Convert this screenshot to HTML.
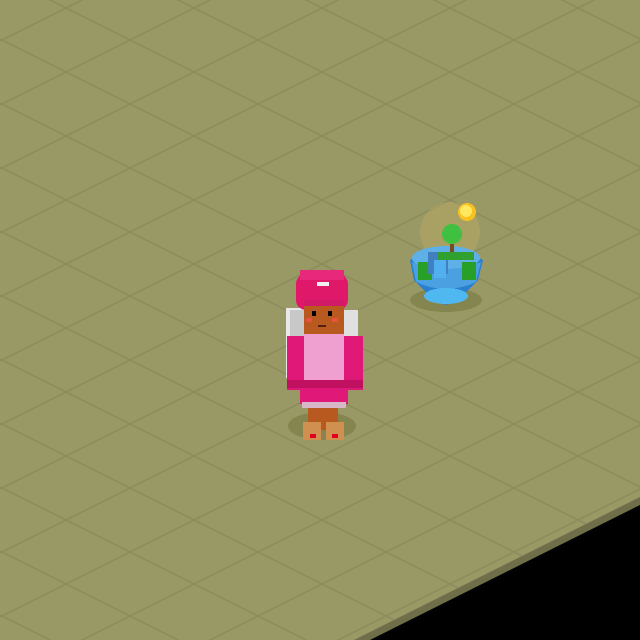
<!DOCTYPE html>
<html><head><style>html,body{margin:0;padding:0;background:#000;width:640px;height:640px;overflow:hidden}svg{display:block;overflow:hidden}</style></head><body>
<svg width="640" height="640" viewBox="0 0 640 640" xmlns="http://www.w3.org/2000/svg" shape-rendering="crispEdges">
<defs>
<clipPath id="fl"><polygon points="0,0 640,0 640,497 360,637 360,640 0,640"/></clipPath>
</defs>
<rect width="640" height="640" fill="#000"/>
<polygon points="0,0 640,0 640,497 354,640 0,640" fill="#999966"/>
<g clip-path="url(#fl)" stroke="#8c8c5c" stroke-width="1.6" fill="none" shape-rendering="auto">
<line x1="0" y1="-345" x2="1400" y2="355"/><line x1="0" y1="-281" x2="1400" y2="419"/><line x1="0" y1="-217" x2="1400" y2="483"/><line x1="0" y1="-153" x2="1400" y2="547"/><line x1="0" y1="-89" x2="1400" y2="611"/><line x1="0" y1="-25" x2="1400" y2="675"/><line x1="0" y1="39" x2="1400" y2="739"/><line x1="0" y1="103" x2="1400" y2="803"/><line x1="0" y1="167" x2="1400" y2="867"/><line x1="0" y1="231" x2="1400" y2="931"/><line x1="0" y1="295" x2="1400" y2="995"/><line x1="0" y1="359" x2="1400" y2="1059"/><line x1="0" y1="423" x2="1400" y2="1123"/><line x1="0" y1="487" x2="1400" y2="1187"/><line x1="0" y1="551" x2="1400" y2="1251"/><line x1="0" y1="615" x2="1400" y2="1315"/>
<line x1="0" y1="41" x2="1400" y2="-659"/><line x1="0" y1="105" x2="1400" y2="-595"/><line x1="0" y1="169" x2="1400" y2="-531"/><line x1="0" y1="233" x2="1400" y2="-467"/><line x1="0" y1="297" x2="1400" y2="-403"/><line x1="0" y1="361" x2="1400" y2="-339"/><line x1="0" y1="425" x2="1400" y2="-275"/><line x1="0" y1="489" x2="1400" y2="-211"/><line x1="0" y1="553" x2="1400" y2="-147"/><line x1="0" y1="617" x2="1400" y2="-83"/><line x1="0" y1="681" x2="1400" y2="-19"/><line x1="0" y1="745" x2="1400" y2="45"/><line x1="0" y1="809" x2="1400" y2="109"/><line x1="0" y1="873" x2="1400" y2="173"/>
</g>
<polygon points="640,497 640,505 370,640 354,640" fill="#6e6e48"/>
<!-- fountain -->
<ellipse cx="446" cy="300" rx="36" ry="12" fill="#85854f"/>
<circle cx="450" cy="232" r="30" fill="#c8b060" opacity="0.35"/>
<circle cx="467" cy="212" r="9" fill="#f8c020"/><circle cx="466" cy="211" r="6" fill="#ffe860"/>
<path d="M410,260 Q446,240 483,260 L478,280 Q460,300 446,305 Q432,300 414,280 Z" fill="#2a80d0"/>
<ellipse cx="446" cy="258" rx="34" ry="12" fill="#60b0e8"/>
<path d="M412,262 Q446,276 481,262 L476,282 Q446,296 416,282 Z" fill="#4aa0e0"/>
<rect x="418" y="262" width="14" height="18" fill="#28a028"/><rect x="462" y="262" width="14" height="18" fill="#28a028"/>
<rect x="428" y="252" width="20" height="22" fill="#4080c0"/><rect x="434" y="260" width="12" height="18" fill="#50b0f0"/>
<rect x="450" y="236" width="4" height="22" fill="#7a4a20"/>
<circle cx="452" cy="234" r="10" fill="#40c040"/>
<rect x="438" y="252" width="36" height="8" fill="#30a030"/>
<ellipse cx="446" cy="296" rx="22" ry="8" fill="#50b8f0"/>
<!-- character -->
<ellipse cx="322" cy="426" rx="34" ry="14" fill="#85854f"/>
<rect x="286" y="308" width="24" height="70" fill="#e8e8e8"/>
<rect x="290" y="310" width="18" height="64" fill="#c8c8c8"/>
<rect x="338" y="310" width="20" height="40" fill="#e0e0e0"/>
<rect x="296" y="274" width="52" height="36" rx="10" fill="#e0186a"/>
<rect x="300" y="270" width="44" height="10" fill="#e8287a"/>
<rect x="317" y="282" width="12" height="4" fill="#eee"/>
<rect x="304" y="302" width="40" height="34" fill="#b85a20"/>
<rect x="304" y="300" width="40" height="6" fill="#d01a68"/>
<rect x="312" y="311" width="4" height="5" fill="#000"/><rect x="328" y="311" width="4" height="5" fill="#000"/>
<rect x="306" y="318" width="6" height="4" fill="#e85040"/><rect x="332" y="318" width="6" height="4" fill="#e85040"/>
<rect x="318" y="325" width="8" height="2" fill="#502010"/>
<rect x="287" y="336" width="76" height="54" fill="#e01878"/>
<rect x="304" y="334" width="40" height="46" fill="#f0a0d0"/>
<rect x="287" y="380" width="76" height="8" fill="#c01060"/>
<rect x="300" y="388" width="48" height="16" fill="#e01878"/>
<rect x="302" y="402" width="44" height="6" fill="#d8b8c8"/>
<rect x="308" y="408" width="30" height="22" fill="#b85a20"/>
<rect x="303" y="422" width="18" height="18" fill="#d09050"/><rect x="326" y="422" width="18" height="18" fill="#d09050"/>
<rect x="310" y="434" width="6" height="4" fill="#e00020"/><rect x="332" y="434" width="6" height="4" fill="#e00020"/>
</svg>
</body></html>
